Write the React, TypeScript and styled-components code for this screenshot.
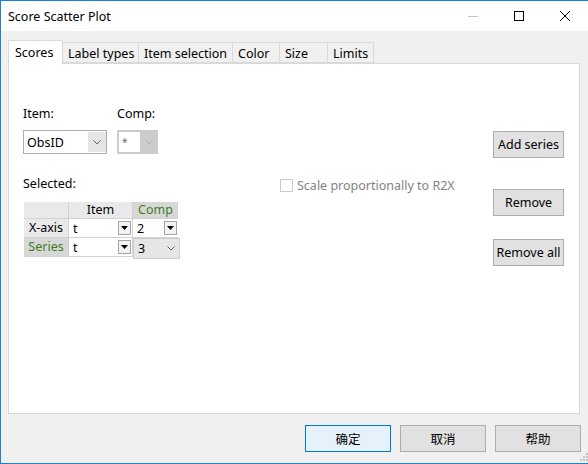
import React from "react";
import styled, { createGlobalStyle } from "styled-components";

const Global = createGlobalStyle`
  html, body { margin: 0; padding: 0; background: #ffffff; }
  body { font-family: "Noto Sans", "Noto Sans CJK SC", sans-serif; font-size: 12.5px; color: #000; }
  * { box-sizing: border-box; }
`;

const Window = styled.div`
  width: 588px;
  height: 464px;
  display: flex;
  flex-direction: column;
  border-left: 1px solid #1883d7;
  border-top: 1px solid #1883d7;
  border-bottom: 1px solid #1883d7;
  background: #f0f0f0;
  position: relative;
`;

const TitleBar = styled.div`
  height: 30px;
  background: #ffffff;
  display: flex;
  align-items: center;
  flex: none;
`;

const Title = styled.div`
  flex: 1;
  padding-left: 7px;
  font-size: 12.5px;
  color: #000;
`;

const CaptionButton = styled.div`
  width: 46px;
  height: 30px;
  display: flex;
  align-items: center;
  justify-content: center;
`;

const Body = styled.div`
  flex: 1;
  display: flex;
  flex-direction: column;
  padding: 9px 8px 0 7px;
`;

const TabStrip = styled.div`
  display: flex;
  align-items: flex-end;
  height: 23px;
  position: relative;
  z-index: 1;
`;

const Tab = styled.div<{ $active?: boolean; $w: number }>`
  height: ${(p) => (p.$active ? "24px" : "21px")};
  margin-bottom: ${(p) => (p.$active ? "-1px" : "0")};
  padding: 0 0 0 ${(p) => (p.$active ? "6px" : "5px")};
  width: ${(p) => p.$w}px;
  display: flex;
  align-items: center;
  background: ${(p) => (p.$active ? "#ffffff" : "#f0f0f0")};
  border: 1px solid #d9d9d9;
  border-bottom: ${(p) => (p.$active ? "none" : "1px solid #d9d9d9")};
  margin-left: ${(p) => (p.$active ? "0" : "-1px")};
  font-size: 12.5px;
  white-space: nowrap;
  padding-top: ${(p) => (p.$active ? "0" : "1px")};
`;

const Panel = styled.div`
  height: 351px;
  background: #ffffff;
  border: 1px solid #d9d9d9;
  display: flex;
  flex: none;
`;

const LeftArea = styled.div`
  flex: 1;
  display: flex;
  flex-direction: column;
  padding: 42px 0 0 14px;
`;

const FieldRow = styled.div`
  display: flex;
  gap: 10px;
`;

const Field = styled.div`
  display: flex;
  flex-direction: column;
  gap: 8px;
`;

const Label = styled.div`
  height: 16px;
  line-height: 16px;
  font-size: 12.5px;
`;

const Combo = styled.div<{ $w: number; $disabled?: boolean }>`
  width: ${(p) => p.$w}px;
  height: 24px;
  border: 1px solid ${(p) => (p.$disabled ? "#cccccc" : "#adadad")};
  background: ${(p) => (p.$disabled ? "#cccccc" : "#ffffff")};
  display: flex;
  align-items: stretch;
`;

const ComboText = styled.div<{ $disabled?: boolean }>`
  flex: 1;
  background: #ffffff;
  padding-left: 3px;
  display: flex;
  align-items: ${(p) => (p.$disabled ? "flex-start" : "center")};
  padding-top: ${(p) => (p.$disabled ? "3px" : "0")};
  font-size: ${(p) => (p.$disabled ? "10px" : "12.5px")};
  color: ${(p) => (p.$disabled ? "#6d6d6d" : "#000")};
  margin: ${(p) => (p.$disabled ? "1px 0 1px 1px" : "0")};
`;

const ComboArrow = styled.div<{ $disabled?: boolean }>`
  width: ${(p) => (p.$disabled ? "17px" : "18px")};
  background: ${(p) => (p.$disabled ? "#cccccc" : "#e5e5e5")};
  display: flex;
  align-items: center;
  justify-content: center;
  margin: ${(p) => (p.$disabled ? "0" : "1px 0")};
`;

const EditorArrow = styled.div`
  width: 16px;
  display: flex;
  align-items: center;
  justify-content: center;
`;

const SelectedRow = styled.div`
  display: flex;
  align-items: center;
  margin-top: 21px;
  height: 16px;
`;

const SelectedLabel = styled.div`
  width: 257px;
  font-size: 12.5px;
`;

const CheckBox = styled.div`
  width: 13px;
  height: 13px;
  border: 1px solid #cccccc;
  background: #ffffff;
  margin-right: 4px;
  margin-top: 5px;
`;

const CheckText = styled.div`
  color: #838383;
  font-size: 12.5px;
  margin-top: 5px;
`;

const Grid = styled.div`
  margin-top: 11px;
  margin-left: 1px;
  display: grid;
  grid-template-columns: 44px 63px 45px;
  grid-template-rows: 16px 18px 18px;
  gap: 1px;
  background: #d2d2d2;
  width: max-content;
  border-bottom: 1px solid #d2d2d2;
`;

const HeadCell = styled.div<{ $sel?: boolean }>`
  background: ${(p) => (p.$sel ? "#d7d7d7" : "#e9e9e9")};
  color: ${(p) => (p.$sel ? "#3f7d1f" : "#000")};
  display: flex;
  align-items: center;
  justify-content: center;
  font-size: 12.5px;
  line-height: 1;
`;

const Cell = styled.div`
  background: #ffffff;
  display: flex;
  align-items: center;
  padding-left: 4px;
  position: relative;
  font-size: 12.5px;
`;

const CellText = styled.span`
  flex: 1;
`;

const DropButton = styled.div`
  width: 13px;
  height: 14px;
  margin-right: 1px;
  border: 1px solid #a5a5a5;
  background: #f3f3f3;
  display: flex;
  align-items: center;
  justify-content: center;
`;

const ActiveEditor = styled.div`
  position: absolute;
  left: 0;
  top: 0;
  width: 47px;
  height: 21px;
  background: #e6e6e6;
  border: 1px solid #cccccc;
  display: flex;
  align-items: center;
  padding-left: 4px;
  font-size: 12.5px;
  z-index: 2;
`;

const RightColumn = styled.div`
  width: 86px;
  padding: 67px 15px 0 0;
  display: flex;
  flex-direction: column;
`;

const SideButton = styled.div<{ $top: number }>`
  margin-top: ${(p) => p.$top}px;
  width: 71px;
  height: 27px;
  background: #e1e1e1;
  border: 1px solid #adadad;
  display: flex;
  align-items: center;
  justify-content: center;
  font-size: 12.5px;
  white-space: nowrap;
`;

const Footer = styled.div`
  display: flex;
  justify-content: flex-end;
  gap: 9px;
  padding-top: 11px;
  margin-right: -1px;
`;

const DialogButton = styled.div<{ $default?: boolean }>`
  width: 86px;
  height: 27px;
  background: ${(p) => (p.$default ? "#e5f1fb" : "#e1e1e1")};
  border: 1px solid ${(p) => (p.$default ? "#0078d7" : "#adadad")};
  display: flex;
  align-items: center;
  justify-content: center;
  font-family: "Noto Sans CJK SC", sans-serif;
  font-size: 12.5px;
`;

const Grip = styled.svg`
  position: absolute;
  right: 0;
  bottom: 2px;
`;

const Chevron = ({ color = "#606060" }: { color?: string }) => (
  <svg width="8" height="5" viewBox="0 0 8 5">
    <path d="M0.5 0.5 L4 4 L7.5 0.5" fill="none" stroke={color} strokeWidth="1" />
  </svg>
);

const Triangle = () => (
  <svg width="7" height="4" viewBox="0 0 7 4">
    <path d="M0 0 H7 L3.5 4 Z" fill="#000" />
  </svg>
);

export default function App() {
  return (
    <>
      <Global />
      <Window>
        <TitleBar>
          <Title>Score Scatter Plot</Title>
          <CaptionButton>
            <svg width="10" height="10" viewBox="0 0 10 10">
              <path d="M0 5.5 H10" stroke="#c3c3c3" strokeWidth="1" />
            </svg>
          </CaptionButton>
          <CaptionButton>
            <svg width="10" height="10" viewBox="0 0 10 10">
              <rect x="0.5" y="0.5" width="9" height="9" fill="none" stroke="#000" strokeWidth="1" />
            </svg>
          </CaptionButton>
          <CaptionButton>
            <svg width="10" height="10" viewBox="0 0 10 10">
              <path d="M0 0 L10 10 M10 0 L0 10" stroke="#000" strokeWidth="1" />
            </svg>
          </CaptionButton>
        </TitleBar>
        <Body>
          <TabStrip>
            <Tab $active $w={55}>Scores</Tab>
            <Tab $w={77}>Label types</Tab>
            <Tab $w={95}>Item selection</Tab>
            <Tab $w={48}>Color</Tab>
            <Tab $w={49}>Size</Tab>
            <Tab $w={47}>Limits</Tab>
          </TabStrip>
          <Panel>
            <LeftArea>
              <FieldRow>
                <Field>
                  <Label>Item:</Label>
                  <Combo $w={84}>
                    <ComboText>ObsID</ComboText>
                    <ComboArrow>
                      <Chevron />
                    </ComboArrow>
                  </Combo>
                </Field>
                <Field>
                  <Label>Comp:</Label>
                  <Combo $w={41} $disabled>
                    <ComboText $disabled>*</ComboText>
                    <ComboArrow $disabled>
                      <Chevron color="#b5b5b5" />
                    </ComboArrow>
                  </Combo>
                </Field>
              </FieldRow>
              <SelectedRow>
                <SelectedLabel>Selected:</SelectedLabel>
                <CheckBox />
                <CheckText>Scale proportionally to R2X</CheckText>
              </SelectedRow>
              <Grid>
                <HeadCell />
                <HeadCell>Item</HeadCell>
                <HeadCell $sel>Comp</HeadCell>
                <HeadCell>X-axis</HeadCell>
                <Cell>
                  <CellText>t</CellText>
                  <DropButton>
                    <Triangle />
                  </DropButton>
                </Cell>
                <Cell>
                  <CellText>2</CellText>
                  <DropButton>
                    <Triangle />
                  </DropButton>
                </Cell>
                <HeadCell $sel>Series</HeadCell>
                <Cell>
                  <CellText>t</CellText>
                  <DropButton>
                    <Triangle />
                  </DropButton>
                </Cell>
                <Cell>
                  <ActiveEditor>
                    <CellText>3</CellText>
                    <EditorArrow>
                      <Chevron />
                    </EditorArrow>
                  </ActiveEditor>
                </Cell>
              </Grid>
            </LeftArea>
            <RightColumn>
              <SideButton $top={0}>Add series</SideButton>
              <SideButton $top={31}>Remove</SideButton>
              <SideButton $top={23}>Remove all</SideButton>
            </RightColumn>
          </Panel>
          <Footer>
            <DialogButton $default>确定</DialogButton>
            <DialogButton>取消</DialogButton>
            <DialogButton>帮助</DialogButton>
          </Footer>
        </Body>
        <Grip width="8" height="8" viewBox="0 0 8 8">
          <rect x="6" y="0" width="2" height="2" fill="#c4c4c4" />
          <rect x="3" y="3" width="2" height="2" fill="#c4c4c4" />
          <rect x="6" y="3" width="2" height="2" fill="#c4c4c4" />
          <rect x="0" y="6" width="2" height="2" fill="#c4c4c4" />
          <rect x="3" y="6" width="2" height="2" fill="#c4c4c4" />
          <rect x="6" y="6" width="2" height="2" fill="#c4c4c4" />
        </Grip>
      </Window>
    </>
  );
}
